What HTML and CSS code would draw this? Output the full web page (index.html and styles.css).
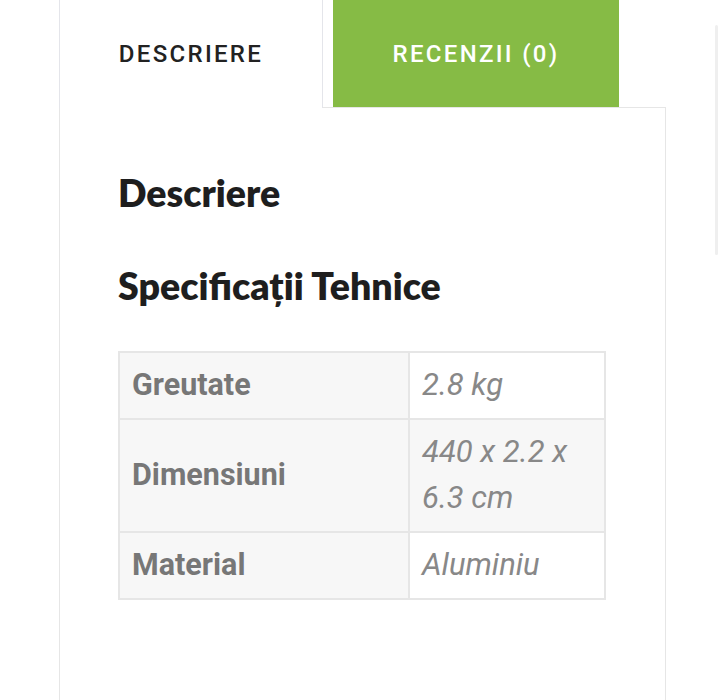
FILE: index.html
```html
<!DOCTYPE html>
<html lang="ro">
<head>
<meta charset="utf-8">
<link rel="stylesheet" href="styles.css">
</head>
<body>
<div class="wrap">
  <div class="tabs">
    <div class="tab tab-active">DESCRIERE</div>
    <div class="tab-rest">
      <div class="tab tab-green">RECENZII (0)</div>
    </div>
  </div>
  <div class="panel">
    <h2 class="h-desc">Descriere</h2>
    <h2 class="h-spec">Specificații Tehnice</h2>
    <table class="specs">
      <tr>
        <th>Greutate</th>
        <td>2.8 kg</td>
      </tr>
      <tr class="alt">
        <th>Dimensiuni</th>
        <td>440 x 2.2 x 6.3 cm</td>
      </tr>
      <tr>
        <th>Material</th>
        <td>Aluminiu</td>
      </tr>
    </table>
  </div>
</div>
<div class="scroll"></div>
</body>
</html>
```

FILE: styles.css
```css
html, body {
  margin: 0;
  padding: 0;
  background: #ffffff;
  height: 700px;
  overflow: hidden;
}
body {
  font-family: Roboto, "Liberation Sans", sans-serif;
  color: #222;
}
.wrap {
  margin-left: 59px;
  width: 607px;
}
.tabs {
  display: flex;
  height: 108px;
}
.tab {
  box-sizing: border-box;
  height: 108px;
  display: flex;
  align-items: center;
  justify-content: center;
  font-size: 24px;
  font-weight: 500;
  letter-spacing: 2.3px;
}
.tab-active {
  width: 264px;
  border-left: 1px solid #e4e5ea;
  border-right: 1px solid #e4e5ea;
  color: #222;
}
.tab-rest {
  flex: 1;
  box-sizing: border-box;
  height: 108px;
  border-bottom: 1px solid #e6e6e6;
  padding-left: 10px;
  display: flex;
  align-items: flex-start;
}
.tab-green {
  width: 286px;
  height: 107px;
  background: #86bb45;
  color: #ffffff;
}
.panel {
  box-sizing: border-box;
  height: 600px;
  border-left: 1px solid #e6e6e6;
  border-right: 1px solid #e6e6e6;
  padding: 0 0 0 58px;
}
.h-desc, .h-spec {
  font-family: Lato, "Open Sans", sans-serif;
  font-weight: 800;
  font-size: 37.5px;
  line-height: 46px;
  margin: 0;
  color: #1e1e1e;
}
.h-desc {
  padding-top: 62px;
}
.h-spec {
  padding-top: 47px;
}
.specs {
  margin-top: 42px;
  width: 488px;
  border-collapse: collapse;
  border: 2px solid #e6e6e6;
  font-size: 31px;
  line-height: 46px;
}
.specs th, .specs td {
  border: 2px solid #e6e6e6;
  padding: 9px 12px 10px;
  text-align: left;
  vertical-align: middle;
}
.specs th {
  width: 264px;
  background: #f7f7f7;
  color: #777;
  font-weight: 700;
  font-size: 30.5px;
}
.specs td {
  color: #888;
  font-style: italic;
  background: #fff;
}
.specs tr.alt td {
  background: #f7f7f7;
}
.scroll {
  position: fixed;
  left: 715px;
  top: 25px;
  width: 3px;
  height: 230px;
  background: #efefef;
  border-radius: 2px;
}
```
